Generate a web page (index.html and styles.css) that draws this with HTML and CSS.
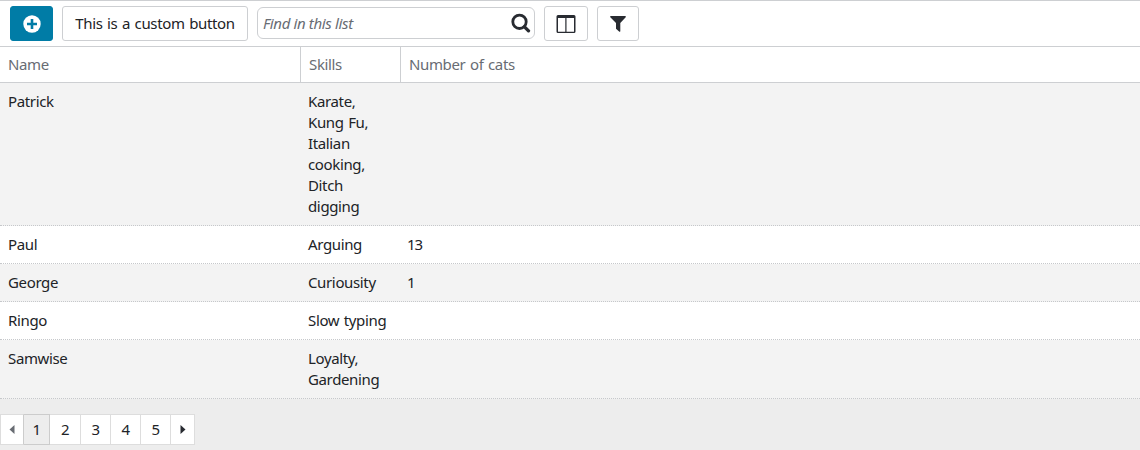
FILE: index.html
```html
<!DOCTYPE html>
<html lang="en">
<head>
<meta charset="utf-8">
<title>List</title>
<link rel="stylesheet" href="styles.css">
</head>
<body>
<div class="toolbar">
  <button class="btn btn-primary" aria-label="Add"><svg width="18" height="18" viewBox="0 0 18 18"><circle cx="9" cy="9" r="8.7" fill="#fff"/><path d="M9 4v10M4 9h10" stroke="#007ca6" stroke-width="2.600"/></svg></button>
  <button class="btn btn-custom">This is a custom button</button>
  <div class="search">
    <span class="placeholder">Find in this list</span>
    <svg width="20" height="20" viewBox="0 0 20 20" fill="none" stroke="#282b31"><circle cx="8.5" cy="8.8" r="6.700" stroke-width="2.800"/><path d="M13.500 13.800l4 4" stroke-width="3.300" stroke-linecap="round"/></svg>
  </div>
  <button class="btn btn-columns" aria-label="Columns"><svg width="20" height="18" viewBox="0 0 20 18"><path fill="#282b31" fill-rule="evenodd" d="M2 0h16q1.500 0 1.500 1.500v15q0 1.500-1.500 1.500H2Q.5 18 .5 16.500v-15Q.5 0 2 0zM2 3v13.700h7.300V3zm8.500 0v13.700H18V3z"/></svg></button>
  <button class="btn btn-filter" aria-label="Filter"><svg width="16" height="16" viewBox="0 0 16 16"><path fill="#282b31" d="M.8 0h14.400q1 .3.500 1.300L10.300 7v8.200q-.3.900-1.200.4L6 12.700V7L.3 1.300Q-.2.300.8 0z"/></svg></button>
</div>
<div class="row head"><div>Name</div><div>Skills</div><div>Number of cats</div></div>
<div class="row data"><div>Patrick</div><div>Karate,<br>Kung Fu,<br>Italian<br>cooking,<br>Ditch<br>digging</div><div></div></div>
<div class="row data"><div>Paul</div><div>Arguing</div><div class="num">13</div></div>
<div class="row data"><div>George</div><div>Curiousity</div><div class="num">1</div></div>
<div class="row data"><div>Ringo</div><div>Slow typing</div><div></div></div>
<div class="row data"><div>Samwise</div><div>Loyalty,<br>Gardening</div><div></div></div>
<div class="pager">
  <span class="page prev"><svg width="6" height="9" viewBox="0 0 6 9"><path d="M5.500 0v9L.5 4.500z" fill="#686c73"/></svg></span>
  <span class="page current">1</span>
  <span class="page second">2</span>
  <span class="page">3</span>
  <span class="page">4</span>
  <span class="page">5</span>
  <span class="page next"><svg width="6" height="9" viewBox="0 0 6 9"><path d="M.5 0v9l5-4.500z" fill="#282b31"/></svg></span>
</div>
</body>
</html>
```
FILE: styles.css
```css
* { box-sizing: border-box; }
body { margin: 0; height: 450px; overflow: hidden; background: #ededed; color: #212327; font: 15px/21px "Noto Sans", sans-serif; letter-spacing: -.36px; word-spacing: 1px; }
svg { display: block; flex: none; }
.toolbar { display: flex; align-items: flex-start; gap: 9px; height: 47px; padding: 5px 10px; background: #fff; border: solid #cdcfd2; border-width: 1px 0; }
.btn { display: flex; align-items: center; justify-content: center; flex: none; height: 35px; padding: 0; background: #fff; border: 1px solid #cdcfd2; border-radius: 3px; color: inherit; font: inherit; letter-spacing: inherit; word-spacing: inherit; white-space: nowrap; }
.btn-primary { width: 43px; background: #007ca6; border-color: #007ca6; }
.btn-custom { width: 186px; }
.btn-columns { width: 44px; }
.btn-filter { width: 42px; }
.search { display: flex; align-items: center; justify-content: space-between; width: 278px; height: 32px; margin-top: 1px; padding: 0 3px 0 5px; border: 1px solid #cdcfd2; border-radius: 6px; }
.placeholder { color: #686c73; font-style: italic; word-spacing: 0; }
.row { display: grid; grid-template-columns: 300px 100px 1fr; }
.head { height: 36px; background: #fff; border-bottom: 1px solid #cdcfd2; color: #686c73; }
.head div { padding: 7px 8px; }
.head div + div { border-left: 1px solid #cdcfd2; }
.data { background: #fff; border-bottom: 1px dotted #c6c8cb; }
.data:nth-child(odd) { background: #f3f3f3; }
.data div { padding: 8px; white-space: nowrap; }
.data .num { padding-left: 7px; letter-spacing: -1px; }
.pager { display: flex; margin-top: 15px; }
.page { display: flex; align-items: center; justify-content: center; width: 30px; height: 31px; background: #fff; border: 1px solid #ddd; border-left: 0; }
.prev { width: 24px; border-left: 1px solid #ddd; border-right-color: #ccc; }
.current { width: 26px; background: #ededed; border-color: #ccc; }
.second { width: 31px; }
.next { width: 24px; }
```
